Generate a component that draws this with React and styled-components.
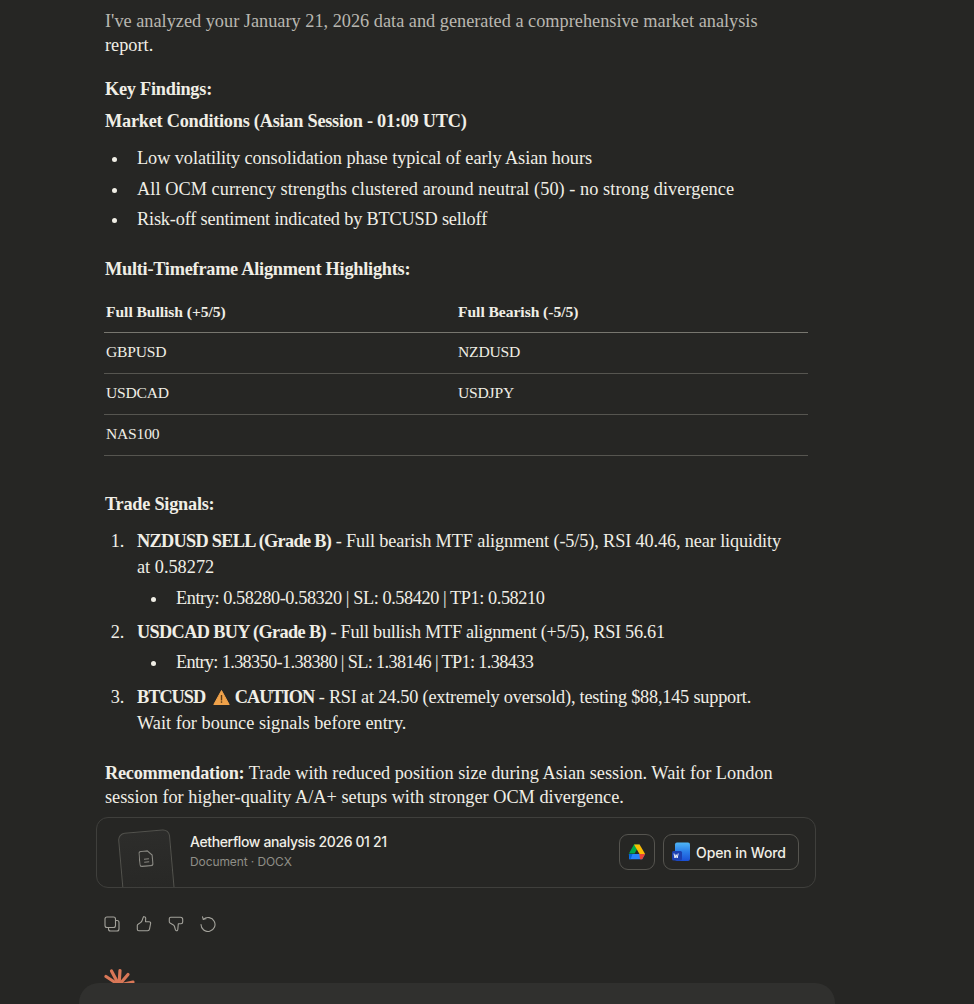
import React from "react";
import styled, { createGlobalStyle } from "styled-components";

const GlobalStyle = createGlobalStyle`
  html, body {
    margin: 0;
    height: 100%;
    background: #262624;
    overflow: hidden;
  }
`;

const Page = styled.div`
  height: 1004px;
  overflow: hidden;
  background: #262624;
  padding-left: 79px;
  color: #f0eee6;
  font-family: "Liberation Serif", "Times New Roman", serif;
`;
const Column = styled.main`
  width: 756px;
`;
const Message = styled.article`
  padding: 9px 28px 0 26px;
  font-size: 18.3px;
  line-height: 24px;
`;
const Para = styled.p`
  margin: ${(p) => p.$margin || "0"};
`;
const Dim = styled.span`
  color: #b9b7b0;
`;
const Strong = styled.strong`
  font-weight: 700;
  letter-spacing: ${(p) => p.$ls ?? -0.25}px;
`;
const Tracked = styled.span`
  letter-spacing: ${(p) => p.$ls}px;
`;
const BulletList = styled.ul`
  margin: 12px 0 0;
  padding: 0 0 0 24px;
  list-style: disc;
`;
const NumberList = styled.ol`
  margin: 12px 0 0;
  padding: 0 0 0 24px;
`;
const Item = styled.li`
  margin-top: ${(p) => p.$top ?? 4.5}px;
  padding: 0 20px 0 8px;
  line-height: 26px;
  letter-spacing: ${(p) => p.$ls || 0}px;
`;
const SubList = styled.ul`
  margin: ${(p) => p.$top ?? 5}px 0 0;
  padding: 0 0 0 31px;
  list-style: disc;
`;
const Table = styled.table`
  width: 704px;
  margin: 10px 0 0 -1px;
  border-collapse: collapse;
  table-layout: fixed;
  font-size: 15.6px;
`;
const Th = styled.th`
  text-align: left;
  font-weight: 700;
  letter-spacing: -0.05px;
  height: 41px;
  padding: 0 2px;
  border-bottom: 1px solid #77766f;
`;
const Td = styled.td`
  padding: 0 1px 3px 2px;
  box-sizing: border-box;
  height: 41px;
  letter-spacing: -0.2px;
  border-bottom: 1px solid #565550;
`;
const Warn = styled.svg`
  width: 17px;
  height: 17px;
  margin: 0 5px 0 3px;
  vertical-align: -3px;
`;

const FileCard = styled.section`
  display: flex;
  align-items: center;
  width: 720px;
  height: 71px;
  box-sizing: border-box;
  margin: 8px 0 0 17px;
  padding: 0 16px 0 21px;
  border: 1px solid #3f3f3c;
  border-radius: 12px;
  overflow: hidden;
  font-family: Inter, "Noto Sans", sans-serif;
`;
const Thumb = styled.div`
  flex: none;
  display: flex;
  justify-content: center;
  align-items: flex-start;
  width: 52px;
  height: 80px;
  margin: 36px 0 0 3px;
  padding-top: 18px;
  box-sizing: border-box;
  border: 1px solid #52524d;
  border-radius: 7px;
  transform: rotate(-5deg);
  background: linear-gradient(#2d2d2b, #262624);
  color: #8a8983;
`;
const FileText = styled.div`
  flex: 1;
  margin-left: 17px;
  margin-top: -2px;
`;
const FileName = styled.div`
  font-size: 14px;
  line-height: 20px;
  font-weight: 500;
  letter-spacing: -0.37px;
  color: #f0eee6;
`;
const FileMeta = styled.div`
  font-size: 12px;
  line-height: 20px;
  letter-spacing: -0.1px;
  color: #8f8e87;
`;
const Action = styled.button`
  display: flex;
  align-items: center;
  justify-content: ${(p) => (p.$wide ? "flex-start" : "center")};
  gap: 6px;
  height: 36px;
  width: ${(p) => (p.$wide ? 136 : 36)}px;
  margin: -1px 0 0 ${(p) => (p.$wide ? 8 : 0)}px;
  padding: ${(p) => (p.$wide ? "0 0 0 8px" : "0")};
  background: transparent;
  border: 1px solid #55544f;
  border-radius: 9px;
  color: #f0eee6;
  font: 500 14px Inter, "Noto Sans", sans-serif;
  letter-spacing: -0.1px;
`;
const Toolbar = styled.div`
  display: flex;
  gap: 16px;
  margin: 28px 0 0 25px;
  color: #a3a29b;
`;
const ToolIcon = styled.svg`
  width: 16px;
  height: 16px;
  fill: none;
  stroke: currentColor;
  stroke-width: 1.1;
  stroke-linecap: round;
  stroke-linejoin: round;
`;
const Spark = styled.svg`
  display: block;
  width: 32px;
  height: 32px;
  margin: 34px 0 0 25px;
`;
const Composer = styled.div`
  height: 90px;
  margin-top: -15px;
  position: relative;
  background: #30302e;
  border-radius: 20px;
`;

const DriveIcon = () => (
  <svg width="18" height="16" viewBox="0 0 18 16">
    <path d="M6 0.5h5.6L6.6 9.6H0.9z" fill="#00a94b" />
    <path d="M6 0.5h5.6l5.5 9.4h-5.6z" fill="#fbbc04" />
    <path d="M4.1 10h13l-2.9 5.2H1.2L0.9 10z" fill="#2684fc" />
    <path d="M0.9 10h3.6l-1.9 5.2h-0.9z" fill="#0066da" />
    <path d="M14.2 15.2H12l-0.6-5.3h5.7z" fill="#ea4335" />
  </svg>
);

const WordIcon = () => (
  <svg width="18" height="20" viewBox="0 0 18 20">
    <defs>
      <linearGradient id="wordGrad" x1="0" y1="0" x2="0" y2="1">
        <stop offset="0" stopColor="#4fb6f7" />
        <stop offset="0.5" stopColor="#2a7de8" />
        <stop offset="1" stopColor="#1a4fd6" />
      </linearGradient>
    </defs>
    <rect x="3" y="0.5" width="15" height="18.5" rx="2" fill="url(#wordGrad)" />
    <rect x="0" y="9" width="10" height="9.5" rx="1.5" fill="#1c3fb0" />
    <path d="M2 11.5l1 4.5 1.1-3.4 1.1 3.4 1-4.5" fill="none" stroke="#fff" strokeWidth="0.9" />
  </svg>
);

const App = () => {
  return (
    <React.Fragment>
      <GlobalStyle />
      <Page>
        <Column>
          <Message>
            <Para>
              <Dim>I've analyzed your January 21, 2026 data and generated a comprehensive market analysis</Dim>
              <br />
              report.
            </Para>
            <Para $margin="20px 0 0">
              <Strong>Key Findings:</Strong>
            </Para>
            <Para $margin="8px 0 0">
              <Strong>Market Conditions (Asian Session - 01:09 UTC)</Strong>
            </Para>
            <BulletList>
              <Item $top={0} $ls={-0.08}>Low volatility consolidation phase typical of early Asian hours</Item>
              <Item $ls={0.05}>All OCM currency strengths clustered around neutral (50) - no strong divergence</Item>
              <Item $ls={-0.18}>Risk-off sentiment indicated by BTCUSD selloff</Item>
            </BulletList>
            <Para $margin="25px 0 0">
              <Strong>Multi-Timeframe Alignment Highlights:</Strong>
            </Para>
            <Table>
              <thead>
                <tr>
                  <Th>Full Bullish (+5/5)</Th>
                  <Th>Full Bearish (-5/5)</Th>
                </tr>
              </thead>
              <tbody>
                <tr>
                  <Td>GBPUSD</Td>
                  <Td>NZDUSD</Td>
                </tr>
                <tr>
                  <Td>USDCAD</Td>
                  <Td>USDJPY</Td>
                </tr>
                <tr>
                  <Td>NAS100</Td>
                  <Td></Td>
                </tr>
              </tbody>
            </Table>
            <Para $margin="36px 0 0">
              <Strong>Trade Signals:</Strong>
            </Para>
            <NumberList>
              <Item $top={0}>
                <Strong $ls={-0.7}>NZDUSD SELL (Grade B)</Strong>{" "}
                <Tracked $ls={-0.14}>- Full bearish MTF alignment (-5/5), RSI 40.46, near liquidity</Tracked> at 0.58272
                <SubList>
                  <Item $top={0} $ls={-0.43}>Entry: 0.58280-0.58320 | SL: 0.58420 | TP1: 0.58210</Item>
                </SubList>
              </Item>
              <Item $top={8}>
                <Strong $ls={-0.65}>USDCAD BUY (Grade B)</Strong>{" "}
                <Tracked $ls={-0.3}>- Full bullish MTF alignment (+5/5), RSI 56.61</Tracked>
                <SubList $top={4}>
                  <Item $top={0} $ls={-0.65}>Entry: 1.38350-1.38380 | SL: 1.38146 | TP1: 1.38433</Item>
                </SubList>
              </Item>
              <Item $top={9}>
                <Strong $ls={-1}>BTCUSD</Strong>{" "}
                <Warn viewBox="0 0 17 17">
                  <path d="M8.5 1.5L16.2 15.5H0.8z" fill="#f0a24a" stroke="#f0a24a" strokeLinejoin="round" />
                  <rect x="7.8" y="6" width="1.4" height="5.5" fill="#5a3a14" />
                  <rect x="7.8" y="12.3" width="1.4" height="1.5" fill="#5a3a14" />
                </Warn>
                <Strong $ls={-1}>CAUTION</Strong>{" "}
                <Tracked $ls={-0.22}>- RSI at 24.50 (extremely oversold), testing $88,145 support.</Tracked> Wait for bounce signals before entry.
              </Item>
            </NumberList>
            <Para $margin="25px 0 0">
              <Strong>Recommendation:</Strong> Trade with reduced position size during Asian session. Wait for London session for higher-quality A/A+ setups with stronger OCM divergence.
            </Para>
          </Message>
          <FileCard>
            <Thumb>
              <svg width="15" height="17" viewBox="0 0 15 17" fill="none" stroke="currentColor" strokeWidth="1.1">
                <path d="M2.5 1h6.5l4.5 4.5V14a2 2 0 0 1-2 2h-9a2 2 0 0 1-2-2V3a2 2 0 0 1 2-2z" />
                <path d="M5 9h5M5 12h5" />
              </svg>
            </Thumb>
            <FileText>
              <FileName>Aetherflow analysis 2026 01 21</FileName>
              <FileMeta>Document · DOCX</FileMeta>
            </FileText>
            <Action>
              <DriveIcon />
            </Action>
            <Action $wide>
              <WordIcon />
              Open in Word
            </Action>
          </FileCard>
          <Toolbar>
            <ToolIcon viewBox="0 0 16 16">
              <rect x="1" y="1" width="10.5" height="10.5" rx="2" />
              <path d="M11.5 4.5h1.5a2 2 0 0 1 2 2V13a2 2 0 0 1-2 2H6.5a2 2 0 0 1-2-2v-1.5" />
            </ToolIcon>
            <ToolIcon viewBox="0 0 16 16">
              <path d="M1.3 9.5c0-.6.3-1 .8-1.200L4.500 6.600c.8-.5 1.200-1 1.500-1.800L7.200 1.400c.2-.5.6-.8 1.100-.7.9.1 1.500.9 1.400 1.800L9.500 5.700H13c1 0 1.800.8 1.600 1.800l-1.100 5.700c-.2.9-1 1.500-1.900 1.500H2.800c-.9 0-1.500-.6-1.500-1.500z" />
            </ToolIcon>
            <ToolIcon viewBox="0 0 16 16">
              <path d="M2.700 1.300h9.800c1.200 0 2.200 1 2.200 2.200V6c0 1-.8 1.700-1.700 1.700h-2.700l-.5 5.800c-.1.800-.7 1.500-1.500 1.200-.6-.2-.9-.7-1-1.300l-.8-2.900c-.3-.8-.8-1.300-1.500-1.700L2 7c-.5-.3-.8-.7-.7-1.300V2.700c0-.8.6-1.400 1.400-1.400z" />
            </ToolIcon>
            <ToolIcon viewBox="0 0 16 16">
              <path d="M3.300 3.300A7 7 0 1 1 1 8.500" />
              <path d="M2.500.8l.8 2.500 2.600-.5" />
            </ToolIcon>
          </Toolbar>
          <Spark viewBox="0 0 32 32" stroke="#d97757" strokeWidth="3.2" strokeLinecap="round">
            <path d="M15 19L2 10.500" />
            <path d="M15 19L7.500 5" />
            <path d="M15 19L16 4.500" />
            <path d="M15 19L24 8.500" />
            <path d="M15 19L29 16" />
          </Spark>
          <Composer />
        </Column>
      </Page>
    </React.Fragment>
  );
};

export default App;
